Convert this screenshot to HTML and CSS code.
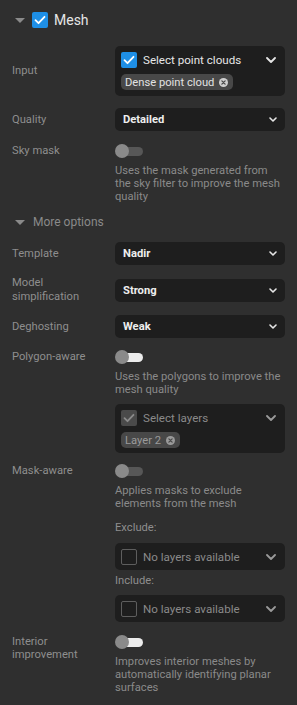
FILE: index.html
```html
<!DOCTYPE html>
<html>
<head>
<meta charset="utf-8">
<link rel="stylesheet" href="styles.css">
</head>
<body>
<div class="panel">
  <div class="header">
    <span class="caret"></span>
    <span class="cb cb-on"><svg viewBox="0 0 16 16"><path d="M3.5 8.2l3 3 6-6.4"/></svg></span>
    <span class="title">Mesh</span>
  </div>

  <div class="row row-center row-input">
    <div class="label">Input</div>
    <div class="multi">
      <div class="multi-top">
        <span class="cb cb-on"><svg viewBox="0 0 16 16"><path d="M3.5 8.2l3 3 6-6.4"/></svg></span>
        <span class="multi-text">Select point clouds</span>
        <svg class="chev chev-big" viewBox="0 0 10 6"><path d="M1 1l4 4 4-4"/></svg>
      </div>
      <div class="chips">
        <span class="chip">Dense point cloud<svg class="chip-x" viewBox="0 0 10 10"><circle cx="5" cy="5" r="5"/><path d="M3.2 3.2l3.6 3.6M6.8 3.2l-3.6 3.6"/></svg></span>
      </div>
    </div>
  </div>

  <div class="row row-center gap12">
    <div class="label">Quality</div>
    <div class="select"><span class="select-text">Detailed</span><svg class="chev chev-small" viewBox="0 0 8 5"><path d="M1 1l3 3 3-3"/></svg></div>
  </div>

  <div class="row gap13">
    <div class="label">Sky mask</div>
    <div class="control">
      <span class="toggle"><span class="track"></span><span class="knob"></span></span>
      <p class="desc">Uses the mask generated from the sky filter to improve the mesh quality</p>
    </div>
  </div>

  <div class="more">
    <span class="caret"></span>
    <span class="more-text">More options</span>
  </div>

  <div class="row row-center gap12">
    <div class="label">Template</div>
    <div class="select"><span class="select-text">Nadir</span><svg class="chev chev-small" viewBox="0 0 8 5"><path d="M1 1l3 3 3-3"/></svg></div>
  </div>

  <div class="row row-center gap11">
    <div class="label">Model simplification</div>
    <div class="select"><span class="select-text">Strong</span><svg class="chev chev-small" viewBox="0 0 8 5"><path d="M1 1l3 3 3-3"/></svg></div>
  </div>

  <div class="row row-center gap11">
    <div class="label">Deghosting</div>
    <div class="select"><span class="select-text">Weak</span><svg class="chev chev-small" viewBox="0 0 8 5"><path d="M1 1l3 3 3-3"/></svg></div>
  </div>

  <div class="row gap12">
    <div class="label">Polygon-aware</div>
    <div class="control">
      <span class="toggle toggle-light"><span class="track"></span><span class="knob"></span></span>
      <p class="desc">Uses the polygons to improve the mesh quality</p>
      <div class="multi multi-disabled">
        <div class="multi-top">
          <span class="cb cb-disabled"><svg viewBox="0 0 16 16"><path d="M3.5 8.2l3 3 6-6.4"/></svg></span>
          <span class="multi-text">Select layers</span>
          <svg class="chev chev-big" viewBox="0 0 10 6"><path d="M1 1l4 4 4-4"/></svg>
        </div>
        <div class="chips">
          <span class="chip">Layer 2<svg class="chip-x" viewBox="0 0 10 10"><circle cx="5" cy="5" r="5"/><path d="M3.2 3.2l3.6 3.6M6.8 3.2l-3.6 3.6"/></svg></span>
        </div>
      </div>
    </div>
  </div>

  <div class="row gap11">
    <div class="label">Mask-aware</div>
    <div class="control">
      <span class="toggle"><span class="track"></span><span class="knob"></span></span>
      <p class="desc">Applies masks to exclude elements from the mesh</p>
      <div class="sub-label sub-exclude">Exclude:</div>
      <div class="empty-select">
        <span class="cb cb-empty"></span>
        <span class="multi-text">No layers available</span>
        <svg class="chev chev-big" viewBox="0 0 10 6"><path d="M1 1l4 4 4-4"/></svg>
      </div>
      <div class="sub-label sub-include">Include:</div>
      <div class="empty-select">
        <span class="cb cb-empty"></span>
        <span class="multi-text">No layers available</span>
        <svg class="chev chev-big" viewBox="0 0 10 6"><path d="M1 1l4 4 4-4"/></svg>
      </div>
    </div>
  </div>

  <div class="row gap13">
    <div class="label label-two">Interior improvement</div>
    <div class="control">
      <span class="toggle toggle-light"><span class="track"></span><span class="knob"></span></span>
      <p class="desc">Improves interior meshes by automatically identifying planar surfaces</p>
    </div>
  </div>
</div>
</body>
</html>
```

FILE: styles.css
```css
html, body {
  margin: 0;
  padding: 0;
  background: #2f2f2f;
}

body {
  font-family: Roboto, "Liberation Sans", sans-serif;
  font-size: 11.2px;
  color: #8c8c8c;
}

.panel {
  padding: 0 12px;
}

.header {
  height: 40px;
  display: flex;
  align-items: center;
}

.caret {
  width: 0;
  height: 0;
  border-left: 5px solid transparent;
  border-right: 5px solid transparent;
  border-top: 5px solid #8a8a8a;
  margin-left: 3px;
}

.header .caret {
  margin-right: 7px;
}

.cb {
  width: 16px;
  height: 16px;
  box-sizing: border-box;
  border-radius: 2px;
  display: inline-flex;
  flex: none;
}

.cb svg {
  width: 16px;
  height: 16px;
  fill: none;
  stroke-width: 1.8;
  stroke-linecap: round;
  stroke-linejoin: round;
}

.cb-on {
  background: #1e8fe6;
}

.cb-on svg {
  stroke: #ffffff;
}

.cb-disabled {
  background: #4a4a4a;
}

.cb-disabled svg {
  stroke: #8a8a8a;
}

.cb-empty {
  border: 1.5px solid #5e5e5e;
}

.title {
  margin-left: 6px;
  font-size: 14px;
  color: #e6e6e6;
}

.row {
  display: grid;
  grid-template-columns: 103px 170px;
}

.row-center {
  align-items: center;
}

.row-input {
  margin-top: 6px;
}

.gap11 { margin-top: 11px; }
.gap12 { margin-top: 12px; }
.gap13 { margin-top: 13px; }

.label {
  line-height: 14px;
  padding-right: 14px;
  color: #8e8e8e;
}

.label-two {
  line-height: 13px;
}

.multi {
  background: #1e1e1e;
  border-radius: 5px;
  padding: 6px 9px 6px 6px;
  height: 50px;
  box-sizing: border-box;
  display: flex;
  flex-direction: column;
  gap: 6px;
}

.multi-top {
  display: flex;
  align-items: center;
  height: 16px;
}

.multi-text {
  margin-left: 6px;
  flex: 1;
  color: #e6e6e6;
}

.multi-top .multi-text {
  font-size: 11.6px;
}

.chev {
  fill: none;
  stroke-linecap: round;
  stroke-linejoin: round;
}

.chev-big {
  width: 10px;
  height: 6px;
  stroke: #e6e6e6;
  stroke-width: 1.8;
}

.chev-small {
  width: 8px;
  height: 5px;
  stroke: #e6e6e6;
  stroke-width: 1.6;
}

.chips {
  display: flex;
}

.chip {
  height: 16px;
  background: #484848;
  border-radius: 5px;
  padding: 0 5px 0 4px;
  display: inline-flex;
  align-items: center;
  color: #e2e2e2;
}

.chip-x {
  width: 9px;
  height: 9px;
  margin-left: 5px;
}

.chip-x circle {
  fill: #cfcfcf;
}

.chip-x path {
  stroke: #4a4a4a;
  stroke-width: 1.4;
  stroke-linecap: round;
}

.multi-disabled {
  margin-top: 8px;
  height: 49px;
}

.multi-disabled .multi-text {
  color: #8a8a8a;
}

.multi-disabled .chev-big {
  stroke: #9a9a9a;
}

.multi-disabled .chip {
  color: #9a9a9a;
}

.multi-disabled .chip-x circle {
  fill: #9a9a9a;
}

.select {
  height: 23px;
  background: #1e1e1e;
  border-radius: 5px;
  display: flex;
  align-items: center;
  padding: 0 8px;
}

.select-text {
  flex: 1;
  font-weight: 700;
  color: #eeeeee;
}

.control {
  display: flex;
  flex-direction: column;
}

.toggle {
  position: relative;
  width: 28px;
  height: 14px;
  display: block;
}

.track {
  position: absolute;
  left: 3px;
  top: 2.5px;
  width: 25px;
  height: 9px;
  border-radius: 5px;
  background: #575757;
}

.knob {
  position: absolute;
  left: 0;
  top: 0;
  width: 14px;
  height: 14px;
  border-radius: 50%;
  background: #8a8a8a;
}

.toggle-light .track {
  background: #ececec;
}

.desc {
  margin: 6px 0 0;
  line-height: 13px;
  color: #8a8a8a;
}

.more {
  display: flex;
  align-items: center;
  height: 16px;
  margin-top: 11px;
}

.more-text {
  margin-left: 8px;
  font-size: 12px;
  color: #8a8a8a;
}

.sub-label {
  line-height: 14px;
  color: #8e8e8e;
}

.sub-exclude {
  margin-top: 11px;
}

.sub-include {
  margin-top: 4px;
}

.empty-select {
  margin-top: 8px;
  height: 27px;
  background: #1e1e1e;
  border-radius: 5px;
  display: flex;
  align-items: center;
  padding: 0 9px 0 6px;
}

.sub-include + .empty-select {
  margin-top: 7px;
}

.empty-select .multi-text {
  color: #8a8a8a;
  font-size: 11.6px;
}

.empty-select .chev-big {
  stroke: #9a9a9a;
}
```
